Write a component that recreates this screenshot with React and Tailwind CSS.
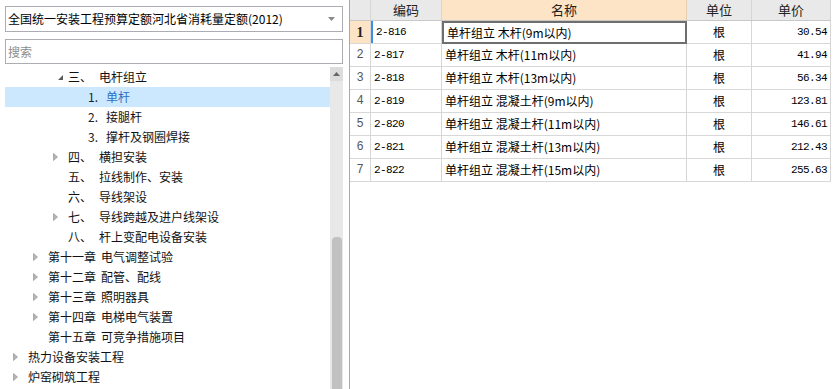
import React from "react";

const tree = [
    { lv: 2, mark: "open", a: "三、", b: "电杆组立" },
    { lv: 3, a: "1.", b: "单杆", sel: true },
    { lv: 3, a: "2.", b: "接腿杆" },
    { lv: 3, a: "3.", b: "撑杆及钢圈焊接" },
    { lv: 2, mark: "closed", a: "四、", b: "横担安装" },
    { lv: 2, a: "五、", b: "拉线制作、安装" },
    { lv: 2, a: "六、", b: "导线架设" },
    { lv: 2, mark: "closed", a: "七、", b: "导线跨越及进户线架设" },
    { lv: 2, a: "八、", b: "杆上变配电设备安装" },
    { lv: 1, mark: "closed", a: "第十一章", b: "电气调整试验" },
    { lv: 1, mark: "closed", a: "第十二章", b: "配管、配线" },
    { lv: 1, mark: "closed", a: "第十三章", b: "照明器具" },
    { lv: 1, mark: "closed", a: "第十四章", b: "电梯电气装置" },
    { lv: 1, a: "第十五章", b: "可竞争措施项目" },
    { lv: 0, mark: "closed", b: "热力设备安装工程" },
    { lv: 0, mark: "closed", b: "炉窑砌筑工程" },
];

const rows = [
    { code: "2-816", name: "单杆组立 木杆(9m以内)", price: "30.54" },
    { code: "2-817", name: "单杆组立 木杆(11m以内)", price: "41.94" },
    { code: "2-818", name: "单杆组立 木杆(13m以内)", price: "56.34" },
    { code: "2-819", name: "单杆组立 混凝土杆(9m以内)", price: "123.81" },
    { code: "2-820", name: "单杆组立 混凝土杆(11m以内)", price: "146.61" },
    { code: "2-821", name: "单杆组立 混凝土杆(13m以内)", price: "212.43" },
    { code: "2-822", name: "单杆组立 混凝土杆(15m以内)", price: "255.63" },
];

const indent = ["pl-[8px]", "pl-[28px]", "pl-[48px]", "pl-[68px]"];

const Arrow = ({ mark }) => {
    if (mark === "open")
        return (
            <svg width="15" height="20" viewBox="0 0 15 20">
                <polygon points="5,13 10,8 10,13" fill="#5a5a5a" />
            </svg>
        );
    if (mark === "closed")
        return (
            <svg width="15" height="20" viewBox="0 0 15 20">
                <polygon points="0.5,6.5 4.5,10 0.5,13.5" fill="#b4b4b4" stroke="#8c8c8c" strokeWidth="0.6" />
            </svg>
        );
    return <span className="w-[15px] inline-block" />;
};

const TreeRow = ({ item }) => (
    <div
        className={`h-[20px] flex items-center whitespace-nowrap ${indent[item.lv]} ${
            item.sel ? "bg-[#cce8ff] text-[#2f6fc0]" : "text-[#111]"
        }`}
    >
        <Arrow mark={item.mark} />
        {item.lv === 3 && <span className="w-[18px] text-[#222]">{item.a}</span>}
        {item.lv === 2 && <span className="w-[31px]">{item.a}</span>}
        {item.lv === 1 && <span className="mr-[5px]">{item.a}</span>}
        <span>{item.b}</span>
    </div>
);

const mono = "font-['Liberation_Mono',monospace] text-[11px] tracking-[-0.6px]";

export default function App() {
    return (
        <div className="flex w-[840px] h-[389px] bg-white overflow-hidden font-['Noto_Sans_CJK_SC',sans-serif] text-[12px] text-black">
            <div className="w-[349px] shrink-0 flex flex-col pt-[6px] pl-[5px] pr-[6px]">
                <div className="h-[26px] border border-[#abadb3] flex items-center justify-between pl-[2px] pr-[7px]">
                    <span className="whitespace-nowrap">全国统一安装工程预算定额河北省消耗量定额(2012)</span>
                    <svg width="7" height="4" viewBox="0 0 7 4">
                        <polygon points="0,0 7,0 3.5,4" fill="#8a8a8a" />
                    </svg>
                </div>
                <div className="h-[25px] mt-[7px] border border-[#abadb3] flex items-center pl-[2px] text-[#8c8c8c]">
                    搜索
                </div>
                <div className="flex flex-1 mt-[3px] min-h-0">
                    <div className="w-[325px]">
                        {tree.map((t, i) => (
                            <TreeRow key={i} item={t} />
                        ))}
                    </div>
                    <div className="w-[13px] bg-[#e8e8e8] flex flex-col items-center">
                        <div className="h-[14px] w-full bg-[#dcdcdc] flex items-center justify-center">
                            <svg width="7" height="4" viewBox="0 0 7 4">
                                <polygon points="0,4 7,4 3.5,0" fill="#666" />
                            </svg>
                        </div>
                        <div className="h-[156px]" />
                        <div className="flex-1 w-[10px] bg-[#c1c1c1] rounded-t-[4px]" />
                    </div>
                </div>
            </div>
            <div className="flex-1 border-l border-[#a9a9a9]">
                <div className="w-[481px]">
                    <div className="flex h-[21px] bg-[#e9e9e9] border-b border-[#c8c8c8] text-[#222] text-[13px]">
                        <div className="w-[21px] border-r border-[#d6d6d6]" />
                        <div className="w-[71px] border-r border-[#d6d6d6] flex items-center justify-center">编码</div>
                        <div className="w-[245px] border-r border-[#e8cfae] bg-[#fde4c6] flex items-center justify-center">名称</div>
                        <div className="w-[65px] border-r border-[#d6d6d6] flex items-center justify-center">单位</div>
                        <div className="w-[79px] border-r border-[#d6d6d6] flex items-center justify-center">单价</div>
                    </div>
                    {rows.map((r, i) => (
                        <div key={r.code} className="flex h-[23px] border-b border-[#d8d8d8]">
                            <div
                                className={`w-[21px] border-r border-[#d6d6d6] flex items-center justify-center ${
                                    i === 0
                                        ? "bg-[#fde4c6] font-bold text-[14px] font-['Liberation_Serif',serif] text-[#222]"
                                        : "text-[#555] font-['Liberation_Mono',monospace] text-[12px]"
                                }`}
                            >
                                {i + 1}
                            </div>
                            <div
                                className={`w-[71px] border-r border-[#d6d6d6] flex items-center pl-[3px] ${mono} ${
                                    i === 0 ? "border-l-2 border-l-[#3d8ee6] pl-[1px]" : ""
                                }`}
                            >
                                {r.code}
                            </div>
                            <div
                                className={`w-[245px] flex items-center pl-[3px] whitespace-nowrap ${
                                    i === 0 ? "border-2 border-[#6e6e6e] pl-[1px] -mb-[1px]" : "border-r border-[#d6d6d6]"
                                }`}
                            >
                                {r.name}
                            </div>
                            <div className="w-[65px] border-r border-[#d6d6d6] flex items-center justify-center">根</div>
                            <div className={`w-[79px] border-r border-[#d6d6d6] flex items-center justify-end pr-[3px] ${mono}`}>
                                {r.price}
                            </div>
                        </div>
                    ))}
                </div>
            </div>
        </div>
    );
}
